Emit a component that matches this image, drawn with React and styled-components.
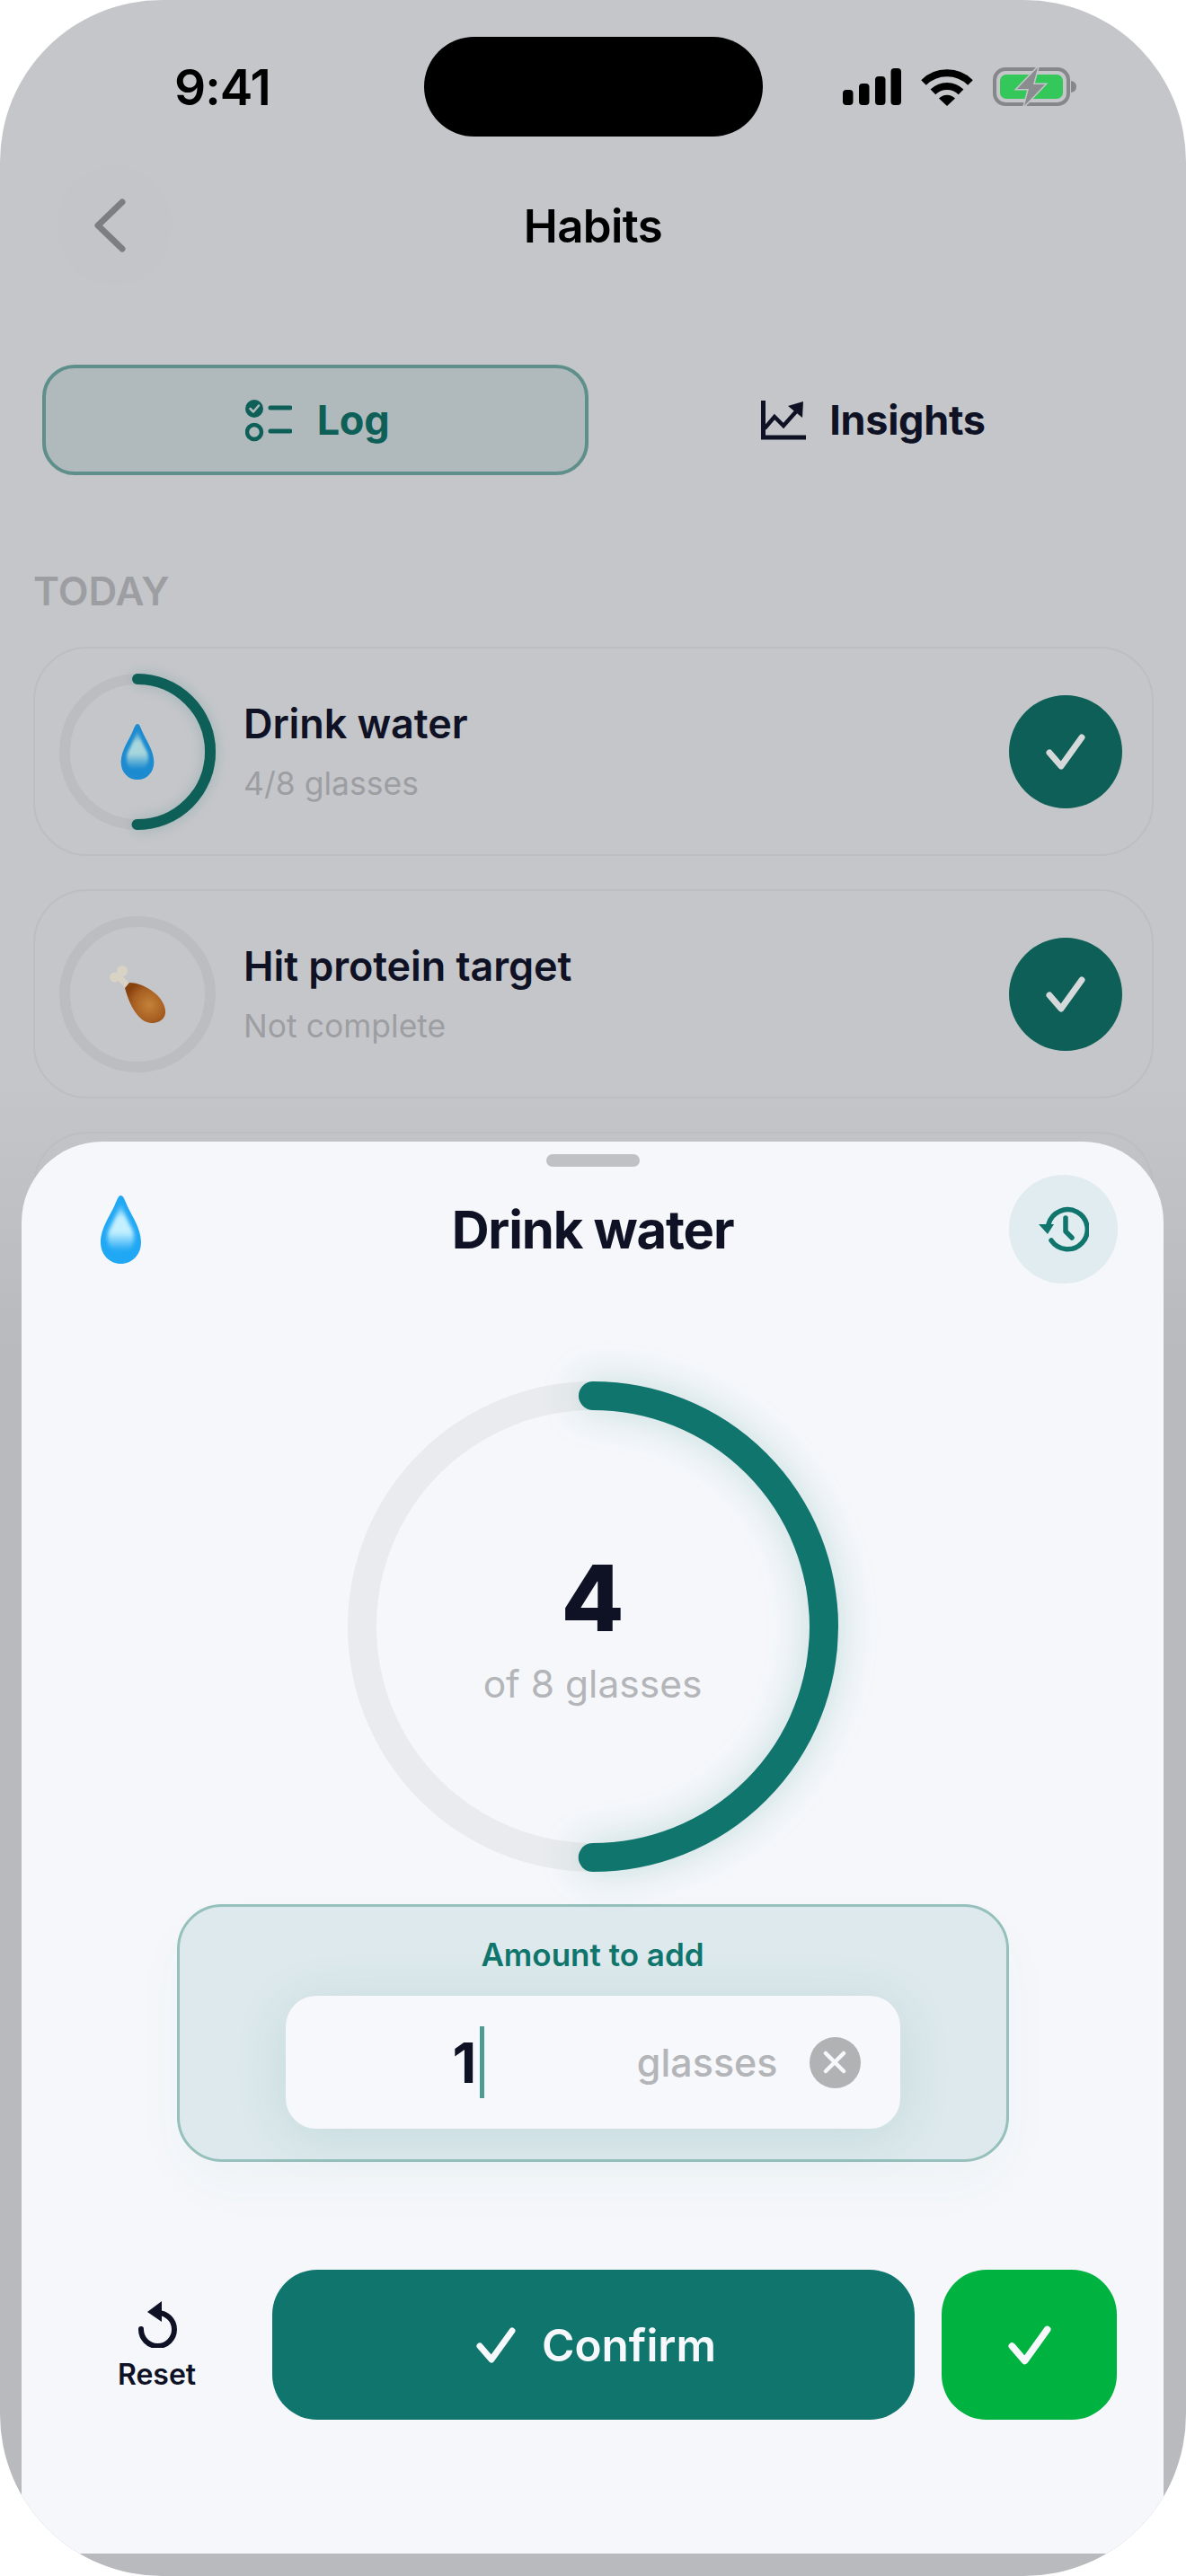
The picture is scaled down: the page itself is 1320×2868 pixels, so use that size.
import styled, { createGlobalStyle } from "styled-components";

const GlobalStyle = createGlobalStyle`
  * { box-sizing: border-box; }
  html, body { margin: 0; padding: 0; background: #fff; }
  body { font-family: Inter, "Liberation Sans", sans-serif; }
`;

const ink = "#0f1225";
const teal = "#10766d";
const darkTeal = "#0d5f57";

const Frame = styled.div`
  position: relative;
  width: 1320px;
  height: 2868px;
  border-radius: 180px;
  overflow: hidden;
  background: linear-gradient(#c5c6ca 0, #c5c6ca 1200px, #b9babe 1500px, #b9babe 100%);
`;

const StatusBar = styled.div`
  display: grid;
  grid-template-columns: 1fr 377px 1fr;
  align-items: center;
  padding-top: 41px;
`;

const Time = styled.div`
  padding-left: 194px;
  font-size: 55px;
  line-height: 60px;
  font-weight: 600;
  letter-spacing: -1px;
  color: #000;
`;

const Island = styled.div`
  height: 111px;
  border-radius: 56px;
  background: #000;
`;

const StatusIcons = styled.div`
  display: flex;
  justify-content: flex-end;
  align-items: center;
  gap: 22px;
  padding-right: 122px;
`;

const NavBar = styled.div`
  display: grid;
  grid-template-columns: 1fr auto 1fr;
  align-items: center;
  margin-top: 32px;
  padding: 0 63px;
`;

const BackButton = styled.div`
  display: flex;
  align-items: center;
  justify-content: center;
  width: 128px;
  height: 134px;
  border-radius: 50%;
  background: #c4c5c9;
  padding-right: 10px;
`;

const NavTitle = styled.div`
  font-size: 51px;
  font-weight: 600;
  letter-spacing: -0.6px;
  color: #000;
`;

const Tabs = styled.div`
  display: grid;
  grid-template-columns: 608px 1fr;
  margin-top: 88px;
  padding: 0 47px;
`;

const Tab = styled.div`
  display: flex;
  align-items: center;
  justify-content: center;
  gap: ${(p) => (p.$active ? "28px" : "26px")};
  height: 123px;
  border-radius: 36px;
  border: ${(p) => (p.$active ? "4px solid #5f8f8a" : "none")};
  background: ${(p) => (p.$active ? "#b0babc" : "transparent")};
  color: ${(p) => (p.$active ? darkTeal : ink)};
  font-size: 45px;
  font-weight: 700;
  letter-spacing: -0.3px;
  padding-left: ${(p) => (p.$active ? "4px" : "16px")};
`;

const SectionLabel = styled.div`
  margin: 107px 0 40px;
  padding-left: 37px;
  font-size: 44px;
  line-height: 44px;
  font-weight: 600;
  color: #9d9ea2;
`;

const CardList = styled.div`
  display: flex;
  flex-direction: column;
  gap: 37px;
  padding: 0 36px 0 37px;
`;

const Card = styled.div`
  display: flex;
  align-items: center;
  gap: 31px;
  height: 233px;
  padding: 0 33px 0 27px;
  border: 2px solid #bdbec2;
  border-radius: 60px;
`;

const RingStack = styled.div`
  display: grid;
  place-items: center;
  flex: none;
  width: ${(p) => p.$size}px;
  height: ${(p) => p.$size}px;
  & > * { grid-area: 1 / 1; }
`;

const RingArc = styled.circle`
  filter: drop-shadow(0 0 ${(p) => p.$glow}px rgba(16, 118, 109, 0.24));
`;

const HabitText = styled.div`
  flex: 1;
`;

const HabitName = styled.div`
  font-size: 45px;
  line-height: 56px;
  font-weight: 600;
  letter-spacing: -0.1px;
  color: ${ink};
`;

const HabitSub = styled.div`
  margin-top: 17px;
  font-size: 35.5px;
  line-height: 44px;
  color: #9d9ea2;
`;

const DoneButton = styled.div`
  display: flex;
  align-items: center;
  justify-content: center;
  width: 126px;
  height: 126px;
  border-radius: 50%;
  background: ${darkTeal};
`;

const Sheet = styled.div`
  position: absolute;
  left: 24px;
  right: 25px;
  top: 1271px;
  bottom: 25px;
  border-radius: 90px 90px 0 0;
  background: #f5f7fb;
`;

const Handle = styled.div`
  width: 104px;
  height: 14px;
  margin: 14px auto 0;
  border-radius: 7px;
  background: #c0c1c5;
`;

const SheetHeader = styled.div`
  display: grid;
  grid-template-columns: 1fr auto 1fr;
  align-items: center;
  margin-top: 9px;
  padding: 0 51px;
`;

const HeaderEmoji = styled.div`
  display: flex;
  padding-left: 37px;
`;

const SheetTitle = styled.div`
  font-size: 58px;
  font-weight: 700;
  letter-spacing: -1.2px;
  color: ${ink};
`;

const HistoryButton = styled.div`
  display: flex;
  align-items: center;
  justify-content: center;
  justify-self: end;
  width: 121px;
  height: 121px;
  border-radius: 50%;
  background: #e0ecef;
`;

const RingWrap = styled.div`
  display: flex;
  justify-content: center;
  margin-top: 109px;
`;

const RingCenter = styled.div`
  display: flex;
  flex-direction: column;
  align-items: center;
  padding-top: 4px;
`;

const BigCount = styled.div`
  font-size: 102px;
  line-height: 110px;
  font-weight: 800;
  color: ${ink};
`;

const BigSub = styled.div`
  margin-top: 14px;
  font-size: 42.5px;
  line-height: 54px;
  color: #b4b5b8;
`;

const AmountPanel = styled.div`
  display: flex;
  flex-direction: column;
  align-items: center;
  width: 926px;
  height: 287px;
  margin: 36px auto 0;
  padding-top: 31px;
  border: 3px solid #95c0bb;
  border-radius: 50px;
  background: #dde9ec;
  box-shadow: 0 26px 60px rgba(16, 118, 109, 0.03);
`;

const AmountLabel = styled.div`
  font-size: 35px;
  line-height: 44px;
  font-weight: 600;
  color: ${teal};
`;

const AmountInput = styled.div`
  display: flex;
  align-items: center;
  width: 684px;
  height: 148px;
  margin-top: 24px;
  padding: 0 44px 0 186px;
  border-radius: 34px;
  background: #f6f8fb;
  box-shadow: 0 8px 60px rgba(16, 118, 109, 0.12);
`;

const AmountValue = styled.div`
  display: flex;
  align-items: center;
  gap: 4px;
  font-size: 62px;
  font-weight: 700;
  color: ${ink};
`;

const Caret = styled.span`
  width: 5px;
  height: 80px;
  background: #4f9c93;
`;

const AmountUnit = styled.div`
  margin-left: auto;
  font-size: 43px;
  font-weight: 500;
  color: #b4b5b8;
`;

const ClearButton = styled.div`
  display: flex;
  align-items: center;
  justify-content: center;
  width: 57px;
  height: 57px;
  margin-left: 35px;
  border-radius: 50%;
  background: #b1b2b3;
`;

const Actions = styled.div`
  display: flex;
  gap: 30px;
  margin-top: 120px;
  padding: 0 52px;
  height: 167px;
`;

const ResetButton = styled.div`
  display: flex;
  flex-direction: column;
  align-items: center;
  justify-content: center;
  gap: 10px;
  width: 197px;
  padding-top: 5px;
  font-size: 32px;
  line-height: 40px;
  font-weight: 600;
  color: ${ink};
`;

const ConfirmButton = styled.div`
  flex: 1;
  display: flex;
  align-items: center;
  justify-content: center;
  gap: 29px;
  padding-left: 6px;
  border-radius: 50px;
  background: ${teal};
  color: #f6f8fb;
  font-size: 49.5px;
  font-weight: 600;
`;

const GreenButton = styled.div`
  display: flex;
  align-items: center;
  justify-content: center;
  width: 195px;
  border-radius: 50px;
  background: #00b341;
`;

function SignalIcon() {
  return (
    <svg width="65" height="41" viewBox="0 0 65 41">
      <rect x="0" y="24" width="11.5" height="17" rx="4" />
      <rect x="18" y="17" width="11.5" height="24" rx="4" />
      <rect x="36" y="9" width="11.5" height="32" rx="4" />
      <rect x="53.5" y="0" width="11.5" height="41" rx="4" />
    </svg>
  );
}

function WifiIcon() {
  return (
    <svg width="58" height="42" viewBox="0 0 58 42">
      <path d="M3 16 A37 37 0 0 1 55 16" fill="none" stroke="#000" strokeWidth="8" />
      <path d="M13.4 26.4 A22 22 0 0 1 44.6 26.4" fill="none" stroke="#000" strokeWidth="8" />
      <path d="M29 42 L20 33.5 A12.5 12.5 0 0 1 38 33.5 Z" />
    </svg>
  );
}

function BatteryIcon() {
  return (
    <svg width="93" height="43" viewBox="0 0 93 43">
      <rect x="2" y="2" width="82" height="39" rx="12" fill="none" stroke="#86878a" strokeWidth="4" />
      <rect x="8" y="8" width="70" height="27" rx="7" fill="#34c759" />
      <path d="M87 15 q6 1 6 6.500 t-6 6.500 Z" fill="#86878a" />
      <path d="M50 0 L27 24 L40 24 L35 43 L58 19 L45 19 Z" fill="#8b8c90" stroke="#c5c6ca" strokeWidth="3" paintOrder="stroke" />
    </svg>
  );
}

function ChevronLeft() {
  return (
    <svg width="36" height="60" viewBox="0 0 36 60">
      <path d="M32 4 L5 30 L32 56" fill="none" stroke="#7d7e82" strokeWidth="7" strokeLinecap="round" strokeLinejoin="round" />
    </svg>
  );
}

function LogIcon() {
  return (
    <svg width="52" height="48" viewBox="0 0 52 48" fill="none" stroke={darkTeal} strokeLinecap="round">
      <circle cx="10" cy="11" r="10" fill={darkTeal} stroke="none" />
      <path d="M5.500 11 L9 14.500 L15 7.500" stroke="#b0babc" strokeWidth="2.500" strokeLinejoin="round" />
      <circle cx="10" cy="37" r="8" strokeWidth="4.500" />
      <path d="M28 10 H50 M28 36 H50" strokeWidth="5" />
    </svg>
  );
}

function InsightsIcon() {
  return (
    <svg width="50" height="44" viewBox="0 0 50 44" fill="none" stroke={ink}>
      <path d="M2.500 0 V41 H50" strokeWidth="5" />
      <path d="M4 31 L15 18 L25 28 L41 10" strokeWidth="4.500" />
      <path d="M30 6 L47 1 L46 19 Z" fill={ink} stroke="none" />
    </svg>
  );
}

function CheckIcon({ width = 44, height = 40, color = "#f6f8fb", weight = 7 }) {
  return (
    <svg width={width} height={height} viewBox="0 0 44 40">
      <path d="M4 21 L17 36 L40 4" fill="none" stroke={color} strokeWidth={weight} strokeLinecap="round" strokeLinejoin="round" />
    </svg>
  );
}

function HistoryIcon() {
  return (
    <svg width="56" height="52" viewBox="0 0 56 52" fill="none" stroke={teal} strokeWidth="5.500" strokeLinecap="round" strokeLinejoin="round">
      <path d="M11 20 A22 22 0 1 1 14 38" />
      <path d="M30 13 V28 L37 35" />
      <path d="M0 20 H17 L10 31 Z" fill={teal} stroke="none" />
    </svg>
  );
}

function ResetIcon() {
  return (
    <svg width="44" height="52" viewBox="0 0 44 52" fill="none" stroke={ink} strokeWidth="6" strokeLinecap="round">
      <path d="M22 13 A18.500 18.500 0 1 1 4 31" />
      <path d="M27 0 L11 12 L27 23 Z" fill={ink} stroke="none" />
    </svg>
  );
}

function ClearIcon() {
  return (
    <svg width="28" height="28" viewBox="0 0 28 28">
      <path d="M4 4 L24 24 M24 4 L4 24" stroke="#f6f8fb" strokeWidth="4.500" strokeLinecap="round" />
    </svg>
  );
}

function DropEmoji({ id, width, height, edge, light }) {
  return (
    <svg width={width} height={height} viewBox="0 0 45 76">
      <defs>
        <linearGradient id={id} x1="0" y1="0" x2="0" y2="1">
          <stop offset="0" stopColor={edge} />
          <stop offset="0.3" stopColor={light} />
          <stop offset="0.58" stopColor={light} />
          <stop offset="0.95" stopColor={edge} />
          <stop offset="1" stopColor={edge} />
        </linearGradient>
        <filter id={`${id}Blur`} x="-20%" y="-20%" width="140%" height="140%">
          <feGaussianBlur stdDeviation="2" />
        </filter>
      </defs>
      <path d="M22.500 0 C25 0 26.500 4 29 10 C33 20 45 36 45 52 C45 66 35 76 22.500 76 C10 76 0 66 0 52 C0 36 12 20 16 10 C18.500 4 20 0 22.500 0 Z" fill={edge} />
      <path d="M22.500 8 C25 16 30 28 35 37 C40 47 37 64 22.500 64 C8 64 5 47 10 37 C15 28 20 16 22.500 8 Z" fill={`url(#${id})`} filter={`url(#${id}Blur)`} />
    </svg>
  );
}

function DrumstickEmoji() {
  return (
    <svg width="62" height="64" viewBox="0 0 62 64">
      <defs>
        <radialGradient id="meat" cx="0.6" cy="0.55" r="0.6">
          <stop offset="0" stopColor="#c28238" />
          <stop offset="0.65" stopColor="#a85f22" />
          <stop offset="1" stopColor="#87430f" />
        </radialGradient>
      </defs>
      <path d="M10 12 L21 24" stroke="#d9d3c6" strokeWidth="7" />
      <circle cx="5.500" cy="13" r="5.500" fill="#d9d3c6" />
      <circle cx="14" cy="6" r="6" fill="#d9d3c6" />
      <path d="M17 25 L22 19 C36 19 60 32 62 50 C63 60 54 64 46 64 C32 63 22 44 17 25 Z" fill="url(#meat)" />
    </svg>
  );
}

function ProgressRing({ size, stroke, progress, track, color, glow }) {
  const r = (size - stroke) / 2;
  const circumference = 2 * Math.PI * r;
  return (
    <svg width={size} height={size} viewBox={`0 0 ${size} ${size}`} style={{ overflow: "visible" }}>
      <circle cx={size / 2} cy={size / 2} r={r} fill="none" stroke={track} strokeWidth={stroke} />
      {progress > 0 && (
        <RingArc
          $glow={glow}
          cx={size / 2}
          cy={size / 2}
          r={r}
          fill="none"
          stroke={color}
          strokeWidth={stroke}
          strokeLinecap="round"
          strokeDasharray={`${circumference * progress} ${circumference}`}
          transform={`rotate(-90 ${size / 2} ${size / 2})`}
        />
      )}
    </svg>
  );
}

function HabitCard({ name, sub, progress, children }) {
  return (
    <Card>
      <RingStack $size={174}>
        <ProgressRing size={174} stroke={12} progress={progress} track="#bcbdc1" color={darkTeal} glow={8} />
        {children}
      </RingStack>
      <HabitText>
        <HabitName>{name}</HabitName>
        <HabitSub>{sub}</HabitSub>
      </HabitText>
      <DoneButton>
        <CheckIcon color="#d5d9d9" />
      </DoneButton>
    </Card>
  );
}

export default function App() {
  return (
    <>
      <GlobalStyle />
      <Frame>
        <StatusBar>
          <Time>9:41</Time>
          <Island />
          <StatusIcons>
            <SignalIcon />
            <WifiIcon />
            <BatteryIcon />
          </StatusIcons>
        </StatusBar>

        <NavBar>
          <BackButton>
            <ChevronLeft />
          </BackButton>
          <NavTitle>Habits</NavTitle>
        </NavBar>

        <Tabs>
          <Tab $active>
            <LogIcon />
            Log
          </Tab>
          <Tab>
            <InsightsIcon />
            Insights
          </Tab>
        </Tabs>

        <SectionLabel>TODAY</SectionLabel>

        <CardList>
          <HabitCard name="Drink water" sub="4/8 glasses" progress={0.5}>
            <DropEmoji id="dropDim" width={38} height={62} edge="#1c8bd0" light="#a7d6dc" />
          </HabitCard>
          <HabitCard name="Hit protein target" sub="Not complete" progress={0}>
            <DrumstickEmoji />
          </HabitCard>
          <Card />
        </CardList>

        <Sheet>
          <Handle />
          <SheetHeader>
            <HeaderEmoji>
              <DropEmoji id="dropBright" width={45} height={76} edge="#20a8f4" light="#c4f0ff" />
            </HeaderEmoji>
            <SheetTitle>Drink water</SheetTitle>
            <HistoryButton>
              <HistoryIcon />
            </HistoryButton>
          </SheetHeader>

          <RingWrap>
            <RingStack $size={546}>
              <ProgressRing size={546} stroke={32} progress={0.5} track="#e9ebee" color={teal} glow={22} />
              <RingCenter>
                <BigCount>4</BigCount>
                <BigSub>of 8 glasses</BigSub>
              </RingCenter>
            </RingStack>
          </RingWrap>

          <AmountPanel>
            <AmountLabel>Amount to add</AmountLabel>
            <AmountInput>
              <AmountValue>
                1
                <Caret />
              </AmountValue>
              <AmountUnit>glasses</AmountUnit>
              <ClearButton>
                <ClearIcon />
              </ClearButton>
            </AmountInput>
          </AmountPanel>

          <Actions>
            <ResetButton>
              <ResetIcon />
              Reset
            </ResetButton>
            <ConfirmButton>
              <CheckIcon />
              Confirm
            </ConfirmButton>
            <GreenButton>
              <CheckIcon width={48} height={44} weight={7} />
            </GreenButton>
          </Actions>
        </Sheet>
      </Frame>
    </>
  );
}
